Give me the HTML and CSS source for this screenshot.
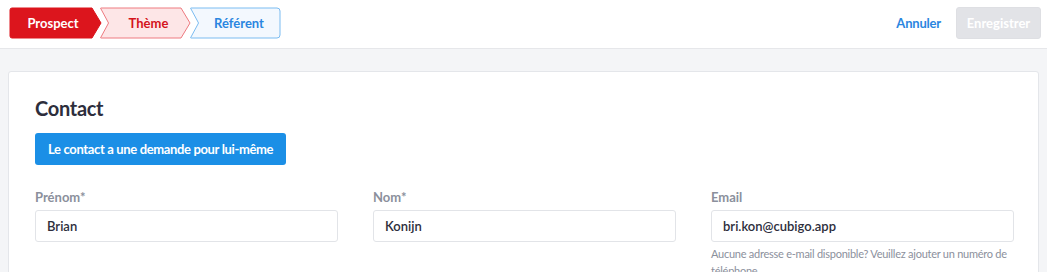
FILE: index.html
```html
<!DOCTYPE html>
<html lang="fr">
<head>
<meta charset="utf-8">
<title>Contact</title>
<link rel="stylesheet" href="styles.css">
</head>
<body>
<header class="topbar">
  <nav class="stepper">
    <div class="step step-prospect">
      <svg class="step-bg" width="94" height="32" viewBox="0 0 94 32"><path d="M3 1 H83 L92 16 L83 31 H3 Q1 31 1 29 V3 Q1 1 3 1 Z" fill="#dc151d" stroke="#dc151d" stroke-width="1"/></svg>
      <span class="step-label">Prospect</span>
    </div>
    <div class="step step-theme">
      <svg class="step-bg" width="94" height="32" viewBox="0 0 94 32"><path d="M2 1 H82 L91 16 L82 31 H2 Q1 31 2 30 L9 17 Q10 16 9 15 L2 2 Q1 1 2 1 Z" fill="#fde6e7" stroke="#ee7a80" stroke-width="1"/></svg>
      <span class="step-label">Thème</span>
    </div>
    <div class="step step-ref">
      <svg class="step-bg" width="94" height="32" viewBox="0 0 94 32"><path d="M2 1 H88 Q91 1 91 4 V28 Q91 31 88 31 H2 Q1 31 2 30 L9 17 Q10 16 9 15 L2 2 Q1 1 2 1 Z" fill="#f3f8fe" stroke="#7bbcf1" stroke-width="1"/></svg>
      <span class="step-label">Référent</span>
    </div>
  </nav>
  <div class="actions">
    <a class="link-cancel" href="#">Annuler</a>
    <button class="btn-save" type="button">Enregistrer</button>
  </div>
</header>
<main class="card">
  <h2 class="card-title">Contact</h2>
  <button class="btn-primary" type="button">Le contact a une demande pour lui-même</button>
  <div class="fields">
    <div class="field">
      <label class="field-label">Prénom*</label>
      <div class="input">Brian</div>
    </div>
    <div class="field">
      <label class="field-label">Nom*</label>
      <div class="input">Konijn</div>
    </div>
    <div class="field">
      <label class="field-label">Email</label>
      <div class="input">bri.kon@cubigo.app</div>
      <p class="help">Aucune adresse e-mail disponible? Veuillez ajouter un numéro de téléphone</p>
    </div>
  </div>
</main>
</body>
</html>
```

FILE: styles.css
```css
* { box-sizing: border-box; }
html, body { margin: 0; padding: 0; }
body {
  background: #f4f5f7;
  font-family: Lato, "Noto Sans", sans-serif;
  color: #2d2e3c;
  overflow: hidden;
}
.topbar {
  height: 49px;
  background: #ffffff;
  border-bottom: 1px solid #e6e7ea;
  display: flex;
  align-items: flex-start;
  justify-content: space-between;
  padding: 7px 6px 0 9px;
}
.stepper {
  display: flex;
}
.step {
  position: relative;
  width: 94px;
  height: 32px;
  display: flex;
  align-items: center;
  justify-content: center;
  font-size: 13px;
  font-weight: 700;
}
.step + .step { margin-left: -4px; }
.step-bg { position: absolute; left: 0; top: 0; }
.step-label { position: relative; }
.step-prospect .step-label { color: #ffffff; margin-right: 6px; }
.step-theme .step-label { color: #d4131b; margin-left: 5px; }
.step-ref .step-label { color: #2a86e0; margin-left: 6px; }
.actions {
  display: flex;
  align-items: center;
  gap: 15px;
}
.link-cancel {
  color: #2a86e0;
  text-decoration: none;
  font-size: 13px;
  font-weight: 700;
  letter-spacing: -0.2px;
}
.btn-save {
  height: 32px;
  width: 85px;
  border: 1px solid #dedfe3;
  border-radius: 3px;
  background: #e2e3e7;
  color: #ffffff;
  font-family: inherit;
  font-size: 13px;
  font-weight: 700;
  padding: 0;
}
.card {
  margin: 22px 8px 0 8px;
  background: #ffffff;
  border: 1px solid #e4e6ea;
  border-radius: 3px;
  padding: 24px 24px 40px 26px;
}
.card-title {
  margin: 0;
  font-size: 20px;
  line-height: 24px;
  font-weight: 700;
  letter-spacing: -0.3px;
  color: #2d2e3c;
}
.btn-primary {
  margin-top: 13px;
  height: 32px;
  padding: 0 13px;
  border: none;
  border-radius: 3px;
  background: #1b8fe6;
  color: #ffffff;
  font-family: inherit;
  font-size: 13px;
  font-weight: 700;
  letter-spacing: -0.35px;
}
.fields {
  margin-top: 23px;
  display: grid;
  grid-template-columns: repeat(3, 303px);
  column-gap: 35px;
}
.field-label {
  display: block;
  font-size: 13px;
  line-height: 18px;
  font-weight: 700;
  color: #8b909c;
  margin-bottom: 4px;
}
.input {
  height: 32px;
  border: 1px solid #e2e4e8;
  border-radius: 3px;
  padding: 0 11px;
  display: flex;
  align-items: center;
  font-size: 13px;
  font-weight: 600;
  color: #2d2e3c;
}
.help {
  margin: 3px 0 0 0;
  font-size: 11px;
  line-height: 17px;
  letter-spacing: -0.25px;
  color: #8b909c;
}
```
